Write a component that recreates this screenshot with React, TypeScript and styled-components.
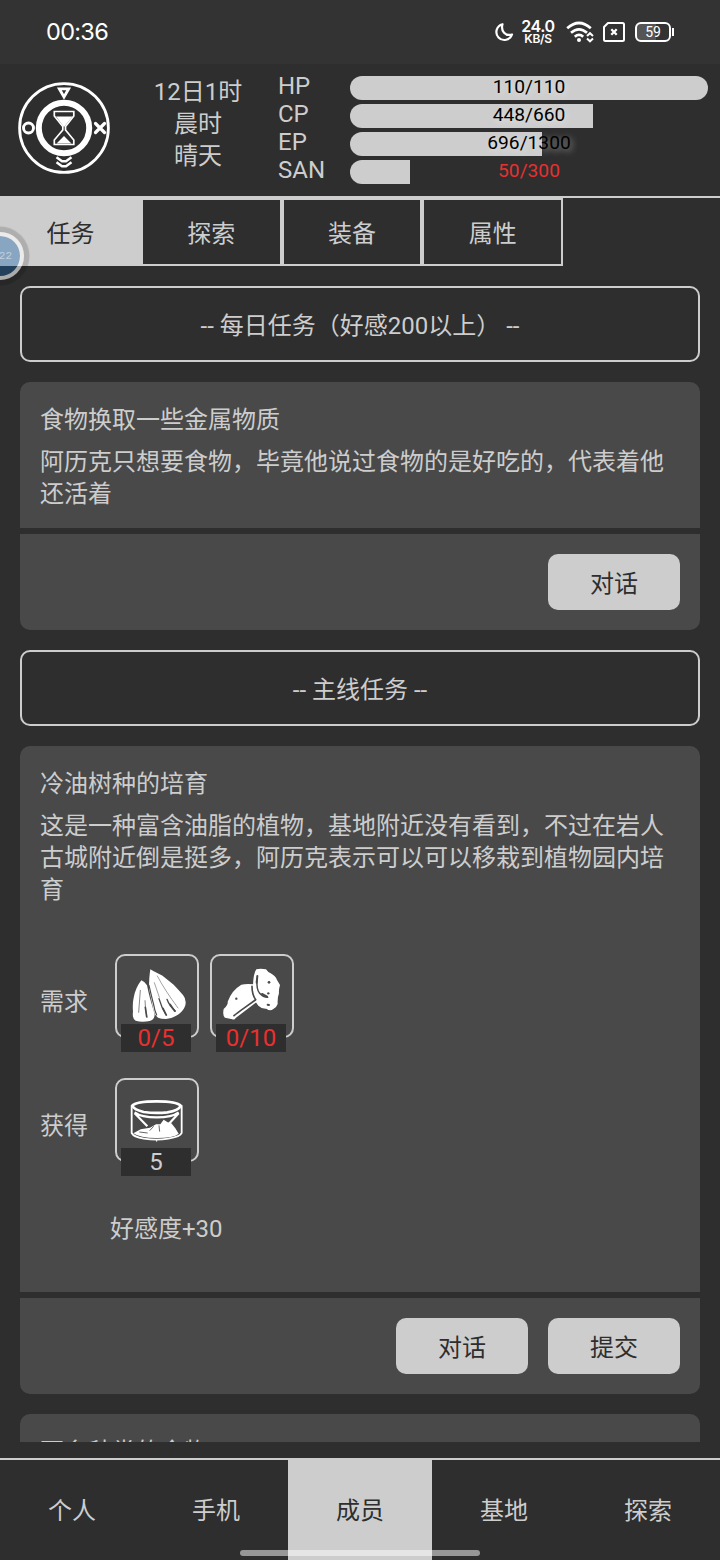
import React from 'react';
import styled, { createGlobalStyle, css } from 'styled-components';

const LIGHT = '#cdcdcd';
const DARK = '#2e2e2e';
const PANEL = '#494949';
const RED = '#e93030';

const GlobalStyle = createGlobalStyle`
  * { box-sizing: border-box; }
  body {
    margin: 0;
    background: ${DARK};
    color: ${LIGHT};
    font: 400 24px/32px Roboto, 'Noto Sans CJK SC', sans-serif;
    overflow: hidden;
  }
`;

const Screen = styled.div`
  position: relative;
  display: flex;
  flex-direction: column;
  width: 720px;
  height: 1560px;
  overflow: hidden;
  background: ${DARK};
`;

const StatusBar = styled.header`
  display: flex;
  align-items: center;
  justify-content: space-between;
  height: 64px;
  padding: 0 46px 0 46px;
  background: #333;
  color: #fff;
`;

const Clock = styled.span`
  font-family: Inter, sans-serif;
  font-weight: 400;
  font-size: 23.5px;
  letter-spacing: -0.7px;
`;

const StatusIcons = styled.div`
  display: flex;
  align-items: center;
`;

const NetSpeed = styled.div`
  display: flex;
  flex-direction: column;
  align-items: center;
  width: 36px;
  margin: 0 10px 0 5px;
  font-family: Inter, sans-serif;
  font-weight: 600;
  font-size: 16px;
  line-height: 13px;
  letter-spacing: -0.4px;
  small {
    font-size: 12px;
    line-height: 12px;
    letter-spacing: -0.3px;
  }
`;

const MoonIcon = styled.svg`
  margin-right: 1px;
`;

const SimIcon = styled.svg`
  margin: 0 10px 0 9px;
`;

const Battery = styled.div`
  display: flex;
  align-items: center;
  gap: 1px;
  &::after {
    content: '';
    width: 2px;
    height: 8px;
    background: #fff;
  }
`;

const BatteryBody = styled.span`
  width: 36px;
  height: 20px;
  border: 2px solid #fff;
  border-radius: 6px;
  background: linear-gradient(90deg, #555 59%, transparent 59%);
  font-size: 14px;
  line-height: 17px;
  text-align: center;
`;

const Hud = styled.section`
  display: flex;
  height: 134px;
  border-bottom: 2px solid ${LIGHT};
`;

const Emblem = styled.svg`
  flex: none;
  width: 128px;
  height: 128px;
`;

const WorldTime = styled.div`
  width: 140px;
  padding-top: 12px;
  text-align: center;
`;

const Stats = styled.div`
  display: flex;
  flex-direction: column;
  gap: 4px;
  width: 430px;
  margin-left: 10px;
  padding-top: 12px;
`;

const StatRow = styled.div`
  display: grid;
  grid-template-columns: 72px 358px;
  height: 24px;
`;

const StatName = styled.span`
  line-height: 20px;
`;

const Gauge = styled.div`
  display: grid;
  grid-template: 24px / 358px;
  > * { grid-area: 1 / 1; }
`;

const GaugeTrack = styled.div`
  border-radius: 12px;
  overflow: hidden;
`;

const GaugeFill = styled.div`
  height: 100%;
  background: ${LIGHT};
`;

const GaugeText = styled.span<{ $low?: boolean }>`
  position: relative;
  color: ${p => (p.$low ? RED : '#000')};
  font-size: 19.2px;
  line-height: 21px;
  text-align: center;
  ${p => !p.$low && css`text-shadow: 2px 2px 6px rgba(255, 255, 255, 0.5);`}
`;

const Tabs = styled.nav`
  display: flex;
  height: 68px;
`;

const Tab = styled.button<{ $active?: boolean }>`
  width: 140.8px;
  padding: 3px 0 0;
  border: 2px solid ${LIGHT};
  background: ${p => (p.$active ? LIGHT : DARK)};
  color: ${p => (p.$active ? DARK : LIGHT)};
  font: inherit;
`;

const QuestList = styled.main`
  display: flex;
  flex-direction: column;
  gap: 20px;
  height: 1176px;
  padding: 20px 20px 0;
  overflow: hidden;
  > * { flex: none; }
`;

const SectionTitle = styled.h2`
  margin: 0;
  height: 76px;
  border: 2px solid ${LIGHT};
  border-radius: 10px;
  font: inherit;
  line-height: 76px;
  text-align: center;
`;

const QuestCard = styled.article`
  display: flex;
  flex-direction: column;
  gap: 6px;
  border-radius: 10px;
  overflow: hidden;
`;

const QuestBody = styled.div<{ $height: number }>`
  height: ${p => p.$height}px;
  padding: 22px 20px 0;
  background: ${PANEL};
`;

const QuestName = styled.h3`
  margin: 0 0 10px;
  font: inherit;
`;

const QuestText = styled.p`
  margin: 0;
`;

const ItemRows = styled.div`
  display: flex;
  flex-direction: column;
  gap: 40px;
  margin-top: 48px;
`;

const ItemRow = styled.div`
  display: flex;
  gap: 11px;
  height: 84px;
`;

const ItemLabel = styled.span`
  width: 64px;
  line-height: 96px;
`;

const ItemSlot = styled.div`
  position: relative;
  width: 84px;
  height: 84px;
  border: 2px solid ${LIGHT};
  border-radius: 10px;
  svg { display: block; width: 80px; height: 80px; }
`;

const ItemCount = styled.span<{ $missing?: boolean }>`
  position: absolute;
  left: 4px;
  top: 68px;
  width: 70px;
  height: 28px;
  background: ${DARK};
  color: ${p => (p.$missing ? RED : LIGHT)};
  line-height: 28px;
  text-align: center;
`;

const Favor = styled.p`
  margin: 51px 0 0 70px;
`;

const QuestFooter = styled.footer`
  display: flex;
  justify-content: flex-end;
  gap: 20px;
  height: 96px;
  padding: 20px;
  background: ${PANEL};
`;

const ActionButton = styled.button`
  width: 132px;
  height: 56px;
  padding: 3px 0 0;
  border: 0;
  border-radius: 10px;
  background: ${LIGHT};
  color: ${DARK};
  font: inherit;
`;

const BottomNav = styled.nav`
  display: grid;
  grid-template-columns: repeat(5, 1fr);
  height: 102px;
  margin-top: auto;
  border-top: 2px solid ${LIGHT};
`;

const NavItem = styled.button<{ $active?: boolean }>`
  padding: 2px 0 0;
  border: 0;
  background: ${p => (p.$active ? LIGHT : DARK)};
  color: ${p => (p.$active ? DARK : LIGHT)};
  font: inherit;
`;

const HomeIndicator = styled.div`
  position: absolute;
  left: 240px;
  bottom: 4px;
  width: 240px;
  height: 6px;
  border-radius: 3px;
  background: rgba(255, 255, 255, 0.5);
`;

const FloatingBall = styled.div`
  position: absolute;
  left: -24px;
  top: 232px;
  width: 48px;
  height: 48px;
  padding-right: 8px;
  border: 4px solid rgba(255, 255, 255, 0.6);
  border-radius: 50%;
  background: rgba(14, 97, 171, 0.36);
  background-clip: padding-box;
  box-shadow: 0 0 1px 5.5px rgba(0, 0, 0, 0.15);
  color: rgba(225, 230, 238, 0.65);
  font: 400 11px/40px 'Liberation Mono', monospace;
  text-align: right;
`;

const stats = [
  { name: 'HP', value: 110, max: 110 },
  { name: 'CP', value: 448, max: 660 },
  { name: 'EP', value: 696, max: 1300 },
  { name: 'SAN', value: 50, max: 300, low: true },
];

const HourglassEmblem = () => (
  <Emblem viewBox="0 64 128 128" fill="none" stroke="#fff">
    <circle cx="64" cy="128" r="44.4" strokeWidth="2.8" />
    <circle cx="64" cy="128" r="25.2" strokeWidth="6" />
    <circle cx="28.5" cy="128" r="5" strokeWidth="2.9" />
    <path d="M95.500 123.500l9 9M104.500 123.500l-9 9" strokeWidth="3.200" strokeLinecap="round" />
    <path d="M59.300 88.800h9.400l-4.700 8.200z" strokeWidth="2.800" />
    <path d="M56.500 157.300l5.500 3.900h4l5.500-3.900M56.500 162.300l5.500 4h4l5.500-4" strokeWidth="2.500" />
    <path d="M54.300 111.500h19.500v4.500l-8.300 10.500v3.500l8.300 10v4.500h-19.500v-4.500l8.500-10v-3.500l-8.500-10.500z" strokeWidth="1.700" />
    <path d="M56 116.500h16.500l-8.500 10.500zM56.500 143.500l7.500-7.500 7.500 7.500z" fill="#fff" stroke="none" />
  </Emblem>
);

const SeedIcon = () => (
  <svg viewBox="52 48 240 240">
    <g fill="#fff">
      <path d="M152 88q10 7 25 13q11 4 20 13l25 20q18 19 28 31q11 13 7 31q-5 16-20 27q-19 13-38 14q-15 0-24-4q-10-8-13-21l-14-66q0-34 4-58z" />
      <path d="M125 121q9 3 17 15q4 20 9 39q7 24 14 48q0 16-15 20q-24 5-42-1q-11-5-8-27q-2-25 2-42q6-31 23-52z" />
    </g>
    <g fill="none" stroke={PANEL} strokeLinecap="round">
      <path d="M148 136q8 35 14 58q3 19 9 31" strokeWidth="3.500" />
      <path d="M173 108q22 42 62 96M164 128l15 44" strokeWidth="1.500" />
      <path d="M178 176q8 28 21 49M202 178q8 22 25 35" strokeWidth="4" />
      <path d="M136 182q1 32 6 51M122 151l-5 66" strokeWidth="2" />
      <path d="M190 205l10 20M211 193l14 20M137 202l4 28" strokeWidth="5" />
    </g>
  </svg>
);

const RootIcon = () => (
  <svg viewBox="336 48 240 240">
    <g fill="#fff">
      <path d="M424 134q16-4 38-1l8 53l-63 48q-3 6-10 4l-22-5q-8-6-4-26q14-12 12-22q12-34 41-51z" />
      <path d="M469 88q12-4 29 0q5 8 14 12q15 8 19 20l9 15q-4 14-3 25q-5 12-4 32q-4 12-14 16q-9 6-20-2q-14 1-24-9q-12-12-10-24q-12-18-6-37q1-35 10-48z" />
    </g>
    <g fill="none" stroke={PANEL} strokeLinecap="round" strokeLinejoin="round">
      <path d="M466 180l-35 25q-20 14-29 22" strokeWidth="5" />
      <path d="M456 139q0 26 11 40" strokeWidth="5" />
      <path d="M471 118q-2 31 8 42q10 12 24 12" strokeWidth="4.500" />
      <path d="M472 108l-2 20M486 162l15 8M503 194l4 1" strokeWidth="6" />
    </g>
    <g fill={PANEL}>
      <circle cx="507" cy="127" r="4" /><circle cx="505" cy="160" r="3.500" /><circle cx="409" cy="176" r="3.500" />
    </g>
  </svg>
);

const JarIcon = () => (
  <svg viewBox="52 30 240 240" fill="none" stroke="#fff" strokeLinejoin="round">
    <path d="M98 107q10-13 73-13q61 0 72 13q-5 15-40 20q-35 4-71-1q-30-7-34-19z" strokeWidth="8" />
    <path d="M96 106v83q6 12 36 17q40 6 74 0q36-6 40-17v-83" strokeWidth="5.500" />
    <path d="M105 127q20 15 66 15t66-15M105 130l38 39M237 130l-29 31" strokeWidth="6.500" />
    <path d="M101 190l22-12l28-5l18-10h13l10-14l12 8l11 3l12 15l10 16q-15 13-66 13t-70-14z" fill="#fff" stroke="none" />
    <path d="M178 166l2 19M150 182l12-13M144 189l-25-3" stroke={PANEL} strokeWidth="2.500" />
    <path d="M171 207v8" strokeWidth="3" />
  </svg>
);

export default function App() {
  return (
    <Screen>
      <GlobalStyle />
      <StatusBar>
        <Clock>00:36</Clock>
        <StatusIcons>
          <MoonIcon width="20" height="20" viewBox="0 0 20 20" fill="none" stroke="#fff" strokeWidth="2.200" strokeLinejoin="round">
            <path d="M8.500 2.200A8 8 0 1 0 18 12.500C11.500 14.500 6.500 9 8.500 2.200z" />
          </MoonIcon>
          <NetSpeed>24.0<small>KB/S</small></NetSpeed>
          <svg width="28" height="22" viewBox="0 0 28 22" fill="none" stroke="#fff" strokeWidth="2.700">
            <path d="M1.200 7.200Q13 -3.200 24.800 7.200M5 11.800Q13 4.800 21 11.800M8.800 15.800Q13 12 17.200 15.800" />
            <circle cx="13" cy="19" r="2" fill="#fff" stroke="none" />
            <path d="M21 15l3-2.800l3 2.800M21 17.500l3 2.800l3-2.800" strokeWidth="2" />
          </svg>
          <SimIcon width="22" height="20" viewBox="0 0 22 20" fill="none" stroke="#fff" strokeWidth="2" strokeLinejoin="round">
            <path d="M5 1H19.500q1.500 0 1.500 1.500V17.500q0 1.500-1.500 1.500H2.500Q1 19 1 17.500V5z" />
            <path d="M8.300 7.300l5.400 5.400M13.700 7.300l-5.400 5.400" strokeWidth="2.300" />
          </SimIcon>
          <Battery><BatteryBody>59</BatteryBody></Battery>
        </StatusIcons>
      </StatusBar>

      <Hud>
        <HourglassEmblem />
        <WorldTime>
          <div>12日1时</div>
          <div>晨时</div>
          <div>晴天</div>
        </WorldTime>
        <Stats>
          {stats.map(s => (
            <StatRow key={s.name}>
              <StatName>{s.name}</StatName>
              <Gauge>
                <GaugeTrack>
                  <GaugeFill style={{ width: `${(s.value / s.max) * 100}%` }} />
                </GaugeTrack>
                <GaugeText $low={s.low}>{`${s.value}/${s.max}`}</GaugeText>
              </Gauge>
            </StatRow>
          ))}
        </Stats>
      </Hud>

      <Tabs>
        <Tab $active>任务</Tab>
        <Tab>探索</Tab>
        <Tab>装备</Tab>
        <Tab>属性</Tab>
      </Tabs>

      <QuestList>
        <SectionTitle>-- 每日任务（好感200以上） --</SectionTitle>
        <QuestCard>
          <QuestBody $height={146}>
            <QuestName>食物换取一些金属物质</QuestName>
            <QuestText>阿历克只想要食物，毕竟他说过食物的是好吃的，代表着他还活着</QuestText>
          </QuestBody>
          <QuestFooter>
            <ActionButton>对话</ActionButton>
          </QuestFooter>
        </QuestCard>

        <SectionTitle>-- 主线任务 --</SectionTitle>
        <QuestCard>
          <QuestBody $height={546}>
            <QuestName>冷油树种的培育</QuestName>
            <QuestText>这是一种富含油脂的植物，基地附近没有看到，不过在岩人古城附近倒是挺多，阿历克表示可以可以移栽到植物园内培育</QuestText>
            <ItemRows>
              <ItemRow>
                <ItemLabel>需求</ItemLabel>
                <ItemSlot><SeedIcon /><ItemCount $missing>0/5</ItemCount></ItemSlot>
                <ItemSlot><RootIcon /><ItemCount $missing>0/10</ItemCount></ItemSlot>
              </ItemRow>
              <ItemRow>
                <ItemLabel>获得</ItemLabel>
                <ItemSlot><JarIcon /><ItemCount>5</ItemCount></ItemSlot>
              </ItemRow>
            </ItemRows>
            <Favor>好感度+30</Favor>
          </QuestBody>
          <QuestFooter>
            <ActionButton>对话</ActionButton>
            <ActionButton>提交</ActionButton>
          </QuestFooter>
        </QuestCard>

        <QuestCard>
          <QuestBody $height={146}>
            <QuestName>更多种类的食物</QuestName>
          </QuestBody>
        </QuestCard>
      </QuestList>

      <BottomNav>
        <NavItem>个人</NavItem>
        <NavItem>手机</NavItem>
        <NavItem $active>成员</NavItem>
        <NavItem>基地</NavItem>
        <NavItem>探索</NavItem>
      </BottomNav>
      <FloatingBall>22</FloatingBall>
      <HomeIndicator />
    </Screen>
  );
}
